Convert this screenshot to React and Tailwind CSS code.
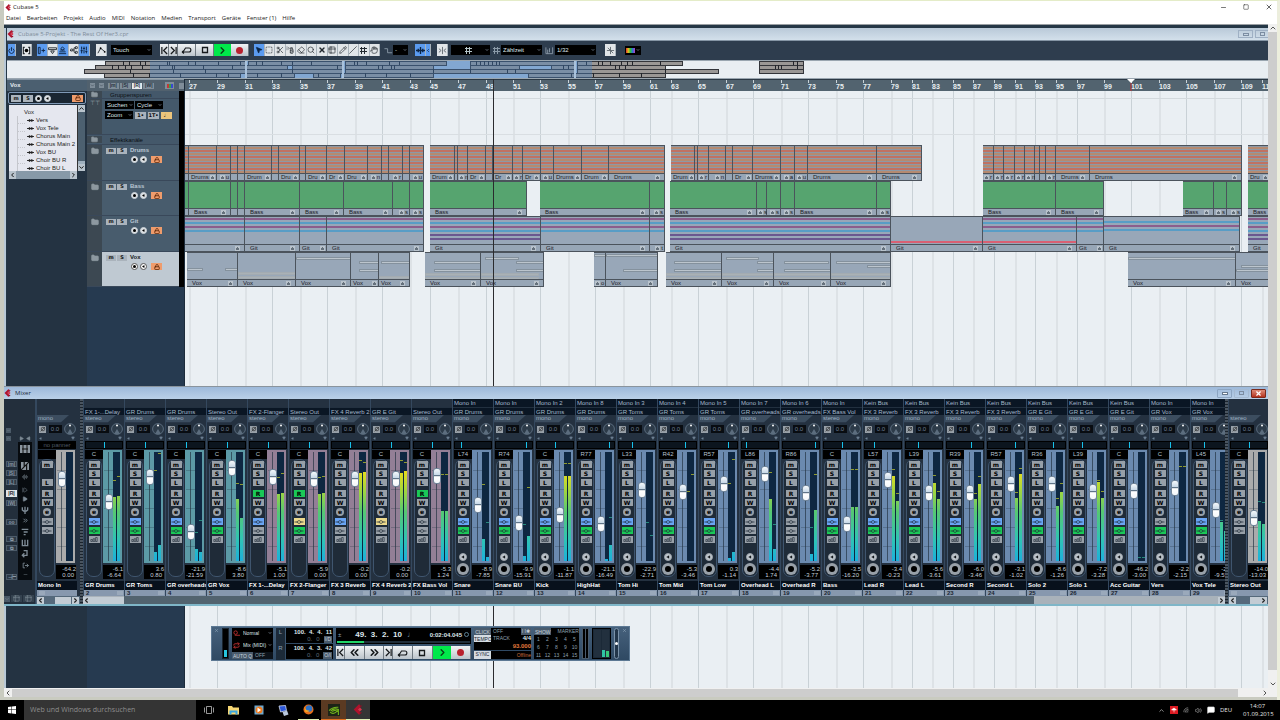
import React from 'react';
import {
  AudioLines, ChevronDown, ChevronLeft, ChevronRight, ChevronUp, ChevronsLeft, ChevronsRight,
  Eraser, Folder, Hand, Lock, MessageSquare, Minus, MousePointer2, Pencil, Power, Repeat,
  Scissors, Search, Slash, SlidersVertical, Square, SquareDashed, StepForward, Table2,
  Volume2, Wifi, X, Network, Play, SprayCan,
} from 'lucide-react';

// timeline positions are measured from the left edge of the project window
const LANE_START = 185;

const BARS = [
  189, 217, 245, 272, 300, 327, 355, 382, 410, 430, 458, 486, 513, 540, 568, 595, 623, 650, 671,
  698, 726, 753, 781, 808, 836, 863, 891, 912, 932, 953, 973, 994, 1015, 1035, 1056, 1077, 1104,
  1131, 1159, 1186, 1214, 1241, 1262,
].map((x, i) => ({ bar: 27 + i * 2, x }));

// [start, end, label]
const DRUMS = [
  [185, 189], [189, 217, 'Drums'], [217, 231, 'u'], [231, 238], [238, 245], [245, 272, 'Drums'],
  [272, 279], [279, 300, 'Drums'], [300, 306], [306, 327, 'Drums'], [327, 345, 'Drums'],
  [345, 368, 'Drums'], [368, 382, 'n'], [382, 389], [389, 403, 'r'], [403, 410], [410, 424, 'u'],
  [430, 455, 'Drums'], [455, 458], [458, 468, 'n'], [468, 486, 'Drums'], [486, 493],
  [493, 513, 'Drums'], [513, 523, 'r'], [523, 541, 'Drums'], [541, 554, 'u'], [554, 582, 'Drums'],
  [582, 609, 'Drums'], [609, 665, 'Drums'], [671, 695, 'Drums'], [695, 698], [698, 709, 'r'],
  [709, 726, 'n'], [726, 733], [733, 753, 'Drums'], [753, 781, 'Drums'], [781, 795, 'a'],
  [795, 808, 'u'], [808, 877, 'Drums'], [877, 922, 'Drums'], [983, 994, 'r'], [994, 1004, 'r'],
  [1004, 1015, 'r'], [1015, 1025, 'r'], [1025, 1035, 'n'], [1035, 1040], [1040, 1046],
  [1046, 1056, 'r'], [1056, 1090, 'Drums'], [1090, 1242, 'Drums'], [1248, 1270, 'Drums'],
];

const BASS = [
  [185, 189], [189, 231, 'Bass'], [231, 238], [238, 245], [245, 300, 'Bass'], [300, 344, 'Bass'],
  [344, 393, 'Bass'], [393, 410, 's'], [410, 424, 's'], [430, 527, 'Bass'], [540, 650, 'Bass'],
  [650, 665, 's'], [670, 757, 'Bass'], [757, 767, 's'], [767, 781, 's'], [781, 795, 's'],
  [795, 877, 'Bass'], [877, 891, 's'], [983, 1056, 'Bass'], [1056, 1104, 'Bass'],
  [1183, 1214, 'Bass'], [1214, 1227, 's'], [1227, 1242, 's'], [1248, 1290, 'Bass'],
];

// last entry picks the stripe set
const GIT = [
  [185, 245, '', 4], [245, 300, 'Git', 4], [300, 327, 'Git', 4], [327, 424, 'Git', 4],
  [430, 541, 'Git', 6], [541, 650, 'Git', 4], [650, 665, 't', 4], [670, 891, 'Git', 6],
  [891, 983, 'Git', 1], [983, 1077, 'Git', 5], [1077, 1104, 'Git', 4], [1104, 1240, 'Git', 2],
  [1248, 1290, 'Git', 6],
];

// last entry: [x, y, width] of the parts inside the folder event
const VOX = [
  [187, 238, 'Vox', [[0, 15, 16], [38, 15, 13]]],
  [238, 296, 'Vox', [[0, 19, 58], [0, 23, 58]]],
  [296, 351, 'Vox', [[0, 4, 55]]],
  [351, 379, 'Vox', [[8, 8, 20], [8, 16, 20]]],
  [379, 410, 'Vox', [[2, 8, 29], [0, 23, 31]]],
  [425, 481, 'Vox', [[9, 8, 47], [9, 16, 47], [0, 20, 56], [0, 24, 56]]],
  [481, 544, 'Vox', [[4, 4, 34], [35, 8, 28], [35, 16, 28], [0, 20, 58], [0, 24, 58]]],
  [594, 606, 'o', [[0, 1, 12]]],
  [606, 658, 'Vox', [[0, 1, 52], [17, 16, 35]]],
  [666, 722, 'Vox', [[8, 8, 48], [8, 16, 48], [0, 20, 56], [0, 24, 56]]],
  [722, 774, 'Vox', [[4, 4, 33], [35, 8, 17], [35, 16, 17], [0, 20, 52], [0, 24, 52]]],
  [774, 831, 'Vox', [[10, 8, 45], [10, 16, 47], [0, 20, 57], [0, 24, 57]]],
  [831, 891, 'Vox', [[5, 8, 55], [36, 12, 24], [0, 20, 60], [0, 24, 60]]],
  [1128, 1236, 'Vox', [[0, 4, 108]]],
  [1236, 1290, 'Vox', [[5, 12, 49], [0, 16, 54]]],
];

const TEAL = 'bg-[#5c9aa6]';
const MAUVE = 'bg-[#937f96]';
const BLUE = 'bg-[#6b8aaf]';
const GREY = 'bg-[#aaabac]';

const ch = (no, name, input, out, type, pan, color, fader, meter, peaks, max, gain, ins, eq, read) => ({
  no, name, input, out, type, pan, color, fader, meter, peaks, max, gain, ins, eq, read,
});

// fader is the distance from the top of the strip, meter and peaks are the heights left / right
const CHANNELS = [
  ch(2, 'GR Drums', '', 'FX 1-...Delay', 'stereo', 'C', TEAL, 50, [64, 65], [80, 84], '-6.1', '-6.64', 'b', 1),
  ch(3, 'GR Toms', '', 'GR Drums', 'stereo', 'C', TEAL, 25, [9, 16], [90, 107], '3.6', '0.80', 'b', 1),
  ch(4, 'GR overheads', '', 'GR Drums', 'stereo', 'C', TEAL, 80, [12, 9], [28, 40], '-21.9', '-21.59', 'b', 1),
  ch(5, 'GR Vox', '', 'Stereo Out', 'stereo', 'C', TEAL, 16, [62, 43], [77, 76], '-8.6', '3.80', 'b', 1),
  ch(6, 'FX 1-...Delay', '', 'FX 2-Flanger', 'stereo', 'C', MAUVE, 25, [67, 68], [83, 87], '-5.1', '1.00', 'b', 0, 1),
  ch(7, 'FX 2-Flanger', '', 'Stereo Out', 'stereo', 'C', MAUVE, 27, [67, 68], [83, 84], '-5.9', '0.00', 'y', 1, 1),
  ch(8, 'FX 3 Reverb', '', 'FX 4 Reverb 2', 'stereo', 'C', MAUVE, 27, [88, 89], [100, 98], '-0.2', '0.00', 'b', 0),
  ch(9, 'FX 4 Reverb 2', '', 'GR E Git', 'stereo', 'C', MAUVE, 27, [88, 90], [100, 98], '-0.2', '0.00', 'y', 0),
  ch(10, 'FX Bass Vol', '', 'Stereo Out', 'mono', 'C', MAUVE, 24, [50, 50], [86, 86], '-5.3', '1.24', '', 0, 1),
  ch(11, 'Snare', 'Mono In', 'GR Drums', 'mono', 'L74', BLUE, 53, [22, 4], [76, 38], '-8.9', '-7.85', 'b', 1),
  ch(12, 'Snare BU', 'Mono In', 'GR Drums', 'mono', 'R74', BLUE, 71, [5, 25], [36, 73], '-9.9', '-15.91', 'b', 1),
  ch(13, 'Kick', 'Mono In 2', 'GR Drums', 'mono', 'C', BLUE, 63, [85, 85], [97, 97], '-1.1', '-11.87', 'b', 1),
  ch(14, 'HighHat', 'Mono In 8', 'GR Drums', 'mono', 'R77', BLUE, 72, [2, 16], [0, 43], '-21.1', '-16.49', 'b', 1),
  ch(15, 'Tom Hi', 'Mono In 3', 'GR Toms', 'mono', 'L33', BLUE, 38, [0, 0], [38, 25], '-22.9', '-2.71', 'b', 1),
  ch(16, 'Tom Mid', 'Mono In 4', 'GR Toms', 'mono', 'R42', BLUE, 40, [0, 0], [69, 86], '-5.3', '-3.46', 'b', 1),
  ch(17, 'Tom Low', 'Mono In 5', 'GR Toms', 'mono', 'R57', BLUE, 32, [3, 9], [77, 101], '0.3', '-1.14', 'b', 1),
  ch(18, 'Overhead L', 'Mono In 7', 'GR overheads', 'mono', 'L86', BLUE, 22, [62, 12], [88, 36], '-4.4', '1.74', '', 0),
  ch(19, 'Overhead R', 'Mono In 6', 'GR overheads', 'mono', 'R86', BLUE, 41, [7, 51], [33, 86], '-5.2', '-3.77', '', 0),
  ch(20, 'Bass', 'Mono In', 'FX Bass Vol', 'stereo', 'C', BLUE, 72, [54, 54], [91, 91], '-3.5', '-16.20', 'b', 1),
  ch(21, 'Lead R', 'Kein Bus', 'FX 3 Reverb', 'mono', 'L57', BLUE, 28, [85, 60], [91, 67], '-3.4', '-0.23', 'b', 1),
  ch(22, 'Lead L', 'Kein Bus', 'FX 3 Reverb', 'mono', 'L39', BLUE, 41, [78, 62], [85, 69], '-5.6', '-3.61', 'b', 1),
  ch(23, 'Second R', 'Kein Bus', 'FX 3 Reverb', 'mono', 'R39', BLUE, 41, [62, 77], [67, 84], '-6.0', '-3.46', 'b', 1),
  ch(24, 'Second L', 'Kein Bus', 'FX 3 Reverb', 'mono', 'R57', BLUE, 32, [63, 87], [68, 92], '-3.1', '-1.02', 'b', 1),
  ch(25, 'Solo 2', 'Kein Bus', 'GR E Git', 'mono', 'R36', BLUE, 32, [55, 69], [62, 77], '-8.6', '-1.26', 'b', 1),
  ch(26, 'Solo 1', 'Kein Bus', 'GR E Git', 'mono', 'L39', BLUE, 40, [79, 63], [80, 69], '-7.2', '-3.28', 'b', 1),
  ch(27, 'Acc Guitar', 'Kein Bus', 'GR E Git', 'mono', 'C', BLUE, 39, [0, 0], [3, 3], '-46.2', '-3.00', 'b', 1),
  ch(28, 'Vers', 'Mono In', 'GR Vox', 'mono', 'C', BLUE, 36, [0, 0], [94, 94], '-2.2', '-2.15', '', 1),
  ch(29, 'Vox Tele', 'Mono In', 'GR Vox', 'mono', 'L45', BLUE, 58, [39, 30], [40, 0], '-21', '-9.55', 'b', 1),
];
const MONO_IN = ch('', 'Mono In', '', '', 'mono', '', GREY, 27, [0, 0], [0, 0], '-64.2', '0.00', '', 0);
const STEREO_OUT = ch('', 'Stereo Out', '', '', 'stereo', 'C', GREY, 66, [40, 37], [59, 58], '-14.0', '-13.03', '', 0);

const Logo = ({ className = 'size-2' }) => (
  <svg viewBox="0 0 16 16" className={className} aria-hidden="true">
    <path d="M9 0 11 4 7 8l4 4-2 4L1 8z" fill="#b0122c" />
    <path d="M10 5l3 3-3 3-3-3z" fill="#d8334a" />
    <path d="M11 1l2 2-3 3zM13 12l-2 3-2-3z" fill="#8e1026" />
  </svg>
);

const Hash = ({ className = '' }) => (
  <svg viewBox="0 0 9 9" className={`size-[9px] shrink-0 ${className}`} shapeRendering="crispEdges" aria-hidden="true">
    <path d="M2 1h1v7H2zM5 1h1v7H5zM1 2h7v1H1zM1 5h7v1H1z" fill="currentColor" />
  </svg>
);

const Skip = ({ right }) => (
  <svg viewBox="0 0 8 10" className={`h-[9px] w-[7px] ${right ? 'rotate-180' : ''}`} aria-hidden="true">
    <path d="M1 1v8M7 1 3 5l4 4" fill="none" stroke="currentColor" strokeWidth="1.4" />
  </svg>
);

const Drop = ({ value, className, label, children }) => (
  <span className={`flex shrink-0 items-center bg-black pr-px text-[#dfe5ea] ${className}`}>
    {children}
    <select aria-label={label} className="h-full min-w-0 flex-1 appearance-none bg-black pl-[2px] leading-none outline-none">
      <option>{value}</option>
    </select>
    <ChevronDown className="size-[4px] shrink-0 text-[#8fa0b0]" strokeWidth={4} />
  </span>
);

const ToolButton = ({ label, className = '', on, children }) => (
  <button
    aria-label={label}
    className={`flex h-[12px] shrink-0 items-center justify-center border-r border-[#a9b3bb] ${
      on ? 'bg-[#5b9bf0] text-[#0b2444]' : 'bg-[#e1e5e8] text-[#22292f]'
    } ${className}`}
  >
    {children}
  </button>
);

const TOOLS = [
  ['Objektauswahl', MousePointer2], ['Auswahlbereich', SquareDashed], ['Zerschneiden', Scissors],
  ['Kleben', SprayCan], ['Radieren', Eraser], ['Zoom', Search], ['Stummschalten', X],
  ['Comp', Table2], ['Stift', Pencil], ['Linie', Slash], ['Time Warp', Hash], ['Scrubben', Hand],
];

const Toolbar = () => (
  <div className="flex h-[19px] items-center overflow-hidden bg-[#2e3d4e] pb-px pl-px text-[6px]">
    <ToolButton label="Aktivieren" on className="w-[8px]"><Power className="size-[7px]" strokeWidth={3} /></ToolButton>
    <ToolButton label="Delay" className="ml-[6px] w-[10px]">
      <svg viewBox="0 0 20 20" className="size-[9px]"><path d="M6 3H3v14h3M14 3h3v14h-3" fill="none" stroke="currentColor" strokeWidth="2.5" /><circle cx="10" cy="10" r="4" /></svg>
    </ToolButton>
    <div className="ml-[5px] flex w-[53px]">
      <ToolButton label="Inspector" on className="flex-1">
        <svg viewBox="0 0 20 20" className="size-[9px]"><path d="M3 3h4v14H3zM10 10h8M14 6v8" fill="none" stroke="currentColor" strokeWidth="2" /></svg>
      </ToolButton>
      <ToolButton label="Infozeile" className="flex-1">
        <svg viewBox="0 0 20 20" className="size-[9px]"><path d="M1 4h18v4H1zM6 11h8l-4 6z" fill="none" stroke="currentColor" strokeWidth="2" /></svg>
      </ToolButton>
      <ToolButton label="Übersicht" on className="flex-1">
        <svg viewBox="0 0 20 20" className="size-[9px]"><path d="M2 17h16M3 13h14M5 9h10M10 2l4 4-4 3-4-3z" fill="none" stroke="currentColor" strokeWidth="2" /></svg>
      </ToolButton>
      <ToolButton label="Pool" className="flex-1"><Network className="size-[8px] -rotate-90" strokeWidth={2.5} /></ToolButton>
      <ToolButton label="Mixer" on className="flex-1"><SlidersVertical className="size-[8px]" strokeWidth={3} /></ToolButton>
    </div>
    <ToolButton label="Automation" className="ml-[6px] w-[11px]">
      <svg viewBox="0 0 20 20" className="size-[9px]"><path d="M2 16 8 5l10 8" fill="none" stroke="currentColor" strokeWidth="2" /><circle cx="8" cy="5" r="2" /><circle cx="17" cy="13" r="2" /></svg>
    </ToolButton>
    <Drop label="Automationsmodus" value="Touch" className="ml-[4px] h-[10px] w-[41px]" />
    <TransportButtons compact />
    <div className="ml-[5px] flex w-[126px]">
      {TOOLS.map(([name, Icon], i) => (
        <ToolButton key={name} label={name} on={i === 0} className="flex-1">
          <Icon className={`size-[8px] ${i === 0 ? 'fill-current' : ''}`} strokeWidth={i === 6 ? 4 : 2} />
        </ToolButton>
      ))}
    </div>
    <svg viewBox="0 0 20 20" className="ml-[4px] size-[9px] shrink-0"><path d="M1 6h7v9h10" fill="none" stroke="#8b9aa8" strokeWidth="2" /></svg>
    <Drop label="Farbe" value="-" className="h-[10px] w-[15px]" />
    <div className="ml-[7px] flex">
      <ToolButton label="Autoscroll" on className="w-[11px]">
        <svg viewBox="0 0 20 20" className="size-[9px]"><path d="M10 2v16M0 10h20M5 6v8M15 6v8" fill="none" stroke="currentColor" strokeWidth="3" /></svg>
      </ToolButton>
      <ToolButton label="Stop" on className="w-[5px]"><ChevronLeft className="size-[5px]" strokeWidth={5} /></ToolButton>
    </div>
    <ToolButton label="Raster" className="ml-[6px] w-[11px]">
      <svg viewBox="0 0 20 20" className="size-[9px]"><path d="M10 2v16M2 6l5 4-5 4M18 6l-5 4 5 4" fill="none" stroke="#60686e" strokeWidth="2" /></svg>
    </ToolButton>
    <Drop label="Rastermodus" value="" className="ml-[3px] h-[10px] w-[39px]"><Hash className="ml-[13px] text-[#b4c4c8]" /></Drop>
    <Hash className="ml-[2px] text-[#8b9aa8]" />
    <Drop label="Rastertyp" value="Zählzeit" className="h-[10px] w-[41px]" />
    <svg viewBox="0 0 20 20" className="ml-[3px] size-[9px] shrink-0"><path d="M2 3v14h15V3M6 17V8M10 14V5" fill="none" stroke="#8b9aa8" strokeWidth="2" /></svg>
    <Drop label="Quantisierung" value="1/32" className="ml-px h-[10px] w-[41px]" />
    <ToolButton label="Nulldurchgänge" className="ml-[9px] w-[11px]">
      <svg viewBox="0 0 20 20" className="size-[9px]"><path d="M10 2v16M2 10h16M4 4l12 12" fill="none" stroke="#60686e" strokeWidth="2" /></svg>
    </ToolButton>
    <button aria-label="Farben" className="ml-[9px] flex h-[9px] w-[16px] shrink-0 items-center gap-px bg-black px-px">
      <span className="h-[5px] w-[9px] bg-[linear-gradient(to_right,#e03030,#e0c020,#30c040,#3070e0,#c040c0)]" />
      <ChevronDown className="size-[4px] text-[#8fa0b0]" strokeWidth={4} />
    </button>
  </div>
);

const TransportButtons = ({ compact }) => {
  const face = 'flex items-center justify-center border-r border-[#6f7880] bg-linear-to-b from-[#f1f3f5] to-[#bcc4cb] text-[#16191c]';
  return (
    <div className={`flex shrink-0 ${compact ? 'ml-[8px] h-[12px] w-[89px]' : 'h-[13px] w-full'}`}>
      <button aria-label="Zum Anfang" className={`${face} w-[9px]`}><Skip /></button>
      {!compact && (
        <>
          <button aria-label="Rücklauf" className={`${face} flex-1`}><ChevronsLeft className="size-[13px]" strokeWidth={3} /></button>
          <button aria-label="Vorlauf" className={`${face} flex-1`}><ChevronsRight className="size-[13px]" strokeWidth={3} /></button>
        </>
      )}
      <button aria-label="Zum Ende" className={`${face} w-[9px]`}><Skip right /></button>
      <button aria-label="Cycle" className={`${face} flex-1`}>
        <svg viewBox="0 0 24 16" className="h-[8px] w-[13px]"><path d="M3 12h14c5 0 5-8 0-8H10l-3 5M3 12l4-3M3 12l4 3" fill="none" stroke="currentColor" strokeWidth="2.2" /></svg>
      </button>
      <button aria-label="Stop" className={`${face} flex-1`}>
        <svg viewBox="0 0 8 8" className="size-[8px]"><path d="M1.500 1.500h5v5h-5z" fill="none" stroke="currentColor" strokeWidth="1.300" /></svg>
      </button>
      <button aria-label="Start" className="flex flex-1 items-center justify-center bg-[#00e84a] text-[#0a3c18]"><ChevronRight className="size-[11px]" strokeWidth={3} /></button>
      <button aria-label="Aufnahme" className={`${face} flex-1`}><span className="size-[7px] rounded-full bg-[#b9202e]" /></button>
    </div>
  );
};

const ROWS = [
  { y: 1, h: 4, parts: [[105, 246], [248, 343], [345, 446], [470, 574], [577, 682], [759, 803]], cuts: [123, 129, 140, 145, 167, 169, 188, 195, 218, 240, 256, 262, 281, 292, 311, 354, 357, 366, 389, 399, 476, 480, 484, 488, 492, 496, 499, 586, 598, 602, 610, 621, 627, 632, 660, 793, 797] },
  { y: 5, h: 4, parts: [[95, 287], [292, 342], [345, 433], [470, 519], [551, 574], [577, 665], [759, 803]], cuts: [112, 118, 125, 131, 142, 159, 172, 174, 203, 232, 337, 378, 382, 391, 394, 563, 568, 615, 619, 625, 775, 778, 781, 797] },
  { y: 9, h: 4, parts: [[84, 342], [345, 574], [577, 718], [759, 803]], cuts: [130, 173, 205, 292, 433, 470, 507, 515, 665] },
  { y: 13, h: 4, parts: [[104, 240], [245, 294], [313, 340], [343, 433], [528, 665]], cuts: [133, 149, 180, 216, 228, 257, 281, 318, 365, 386, 410, 571, 593, 619, 641] },
];

const Overview = () => (
  <div className="h-[19px] overflow-hidden border-y border-[#9aa6b0] bg-[#e9eef2]">
    <svg width="1261" height="17" viewBox="7 0 1261 17" shapeRendering="crispEdges" aria-label="Projektübersicht">
      <rect x="150" y="0" width="442" height="17" fill="#a6bfdb" />
      {ROWS.map((r) =>
        r.parts.map(([a, b]) => (
          <rect key={`${r.y}-${a}`} x={a} y={r.y - 1} width={b - a} height={r.h} fill="#9a9795" stroke="#33353a" strokeWidth="1" />
        ))
      )}
      {ROWS.map((r) => r.cuts.map((c) => <rect key={`${r.y}c${c}`} x={c} y={r.y - 1} width="1" height={r.h} fill="#22252b" />))}
      <rect x="150" y="0" width="442" height="17" fill="#4680bf" fillOpacity="0.38" />
      <path d="M246 0v17M343 0v17M575 0v17" stroke="#a9c2dc" strokeWidth="2" />
    </svg>
  </div>
);

const MINI = 'flex items-center justify-center bg-[#aab3bc] text-[5px] font-bold leading-none text-[#111] font-["DejaVu_Sans",sans-serif]';

const ArmButtons = ({ light }) => (
  <div className="flex items-center gap-[2px]">
    {[0, 1].map((i) => (
      <button
        key={i}
        aria-label={i ? 'Monitor' : 'Aufnahme'}
        className={`flex size-[7px] items-center justify-center rounded-full border ${
          light ? 'border-[#555] bg-white text-black' : 'border-[#c9d0d6] bg-[#dfe3e6] text-black'
        }`}
      >
        {i ? <Play className="size-[3px] rotate-180 fill-current" /> : <span className="size-[3px] rounded-full bg-black" />}
      </button>
    ))}
  </div>
);

const LockButton = ({ className = '' }) => (
  <button aria-label="Sperren" className={`flex h-[7px] w-[11px] items-center justify-center bg-[#ef9c6c] text-[#5a2608] ${className}`}>
    <Lock className="size-[6px]" strokeWidth={3} />
  </button>
);

const Inspector = () => (
  <aside className="flex w-[80px] shrink-0 flex-col bg-[#243342]">
    <h2 className="h-[12px] border-t border-[#8494a2] bg-[#4b5f70] pl-[3px] text-[6px] leading-[10px] font-bold text-[#e6ebef]">Vox</h2>
    <div className="m-px flex h-[12px] items-center gap-[2px] rounded-[2px] border border-[#7f98b5] bg-[#1a2632] px-[2px]">
      <button className={`${MINI} h-[7px] w-[10px]`}>m</button>
      <button className={`${MINI} h-[7px] w-[10px]`}>S</button>
      <ArmButtons />
      <LockButton className="ml-auto" />
    </div>
    <div className="mr-[2px] flex h-[66px] pl-[2px]">
      <ul className="min-w-0 flex-1 overflow-hidden bg-[#e5e7ef] pt-[3px] text-[6px] leading-[8px] text-[#1d1d22]">
        <li className="pl-[15px]">Vox</li>
        {['Vers', 'Vox Tele', 'Chorus Main', 'Chorus Main 2', 'Vox BU', 'Choir BU R', 'Choir BU L'].map((t) => (
          <li key={t} className="flex items-center gap-[2px] whitespace-nowrap">
            <span className="ml-[8px] h-[8px] w-[8px] border-b border-l border-[#c5c7cd] [border-bottom-style:dotted]" />
            <svg viewBox="0 0 7 5" className="h-[5px] w-[7px]"><path d="M0 2.5h7" stroke="#333" /><path d="M1 2.5 2.5 1 3.5 2 5 1l1 1.5L5 4 3.5 3 2.5 4z" fill="#222" /></svg>
            {t}
          </li>
        ))}
      </ul>
      <div className="flex w-[8px] flex-col items-center justify-between border-l border-[#333] bg-[#4c6070]">
        <ChevronUp className="h-[7px] w-full bg-[#b9c4cd]" strokeWidth={3} />
        <span className="mt-auto h-[3px] w-full bg-[#9fb0be]" />
        <ChevronDown className="h-[7px] w-full bg-[#b9c4cd]" strokeWidth={3} />
      </div>
    </div>
    <div className="mx-[2px] flex h-[8px] w-[68px] items-center justify-between bg-[#8799a8]">
      <ChevronLeft className="h-full w-[7px] bg-[#b9c4cd]" strokeWidth={3} />
      <ChevronRight className="h-full w-[7px] bg-[#b9c4cd]" strokeWidth={3} />
    </div>
  </aside>
);

const TrackRow = ({ name, className, selected }) => (
  <li className={`flex border-b border-[#39485a] ${className}`}>
    <span className="flex w-[15px] justify-center bg-[#3c4852] pt-[2px]"><Folder className="size-[8px] fill-[#8d98a0] text-[#8d98a0]" /></span>
    <div className={`flex-1 pt-[2px] pl-[4px] ${selected ? 'bg-[#bfc9d2] text-[#15191d]' : 'bg-[#485c6d] text-[#b9c7d3]'}`}>
      <div className="flex items-center gap-px text-[6px] leading-[7px] font-bold">
        <button className={`${MINI} h-[6px] w-[10px]`}>m</button>
        <button className={`${MINI} h-[6px] w-[10px]`}>S</button>
        <span className="pl-[2px]">{name}</span>
      </div>
      <div className="mt-[2px] flex items-center gap-[4px] pl-[25px]">
        <ArmButtons light={selected} />
        <LockButton />
      </div>
    </div>
  </li>
);

const TrackList = () => (
  <section className="w-[98px] shrink-0 border-r border-[#1c2b3a] bg-[#263a50]">
    <div className="flex h-[12px] items-center gap-px border-t border-[#8494a2] bg-[#51616e] pl-[3px] text-[5px] leading-none text-[#26333f]">
      <ChevronDown className="mr-[3px] size-[5px] bg-[#7f8d99]" />
      <ChevronDown className="mr-[3px] size-[5px] bg-[#7f8d99]" />
      {['m', 'S', 'R', 'W'].map((b) => (
        <button key={b} className={`h-[6px] w-[11px] font-bold ${b === 'R' ? 'bg-[#e6eaed]' : 'bg-[#7f8d99]'}`}>|{b}|</button>
      ))}
      <button aria-label="Spurfarben" className="ml-[10px] flex h-[7px] w-[9px] items-center justify-center bg-[#7f8d99]"><span className="h-[4px] w-[6px] bg-[linear-gradient(to_right,#c03838_33%,#38a048_33%_66%,#3848d0_66%)]" /></button>
      <button aria-label="Teilen" className="ml-[4px] h-[6px] w-[5px] bg-[#7f8d99]" />
    </div>
    <div className="flex">
      <ul className="flex-1">
        <li className="flex h-[8px] items-center border-b border-[#39485a] bg-[#44586a] text-[6px] leading-none text-[#0a0e12]">
          <span className="flex w-[15px] justify-center bg-[#3c4852]"><Folder className="size-[7px] fill-[#8d98a0] text-[#8d98a0]" /></span>
          <span className="pl-[8px]">Gruppenspuren</span>
        </li>
        <li className="flex h-[36px] border-b border-[#39485a] text-[6px]">
          <span className="w-[15px] bg-[#3c4852] pt-px text-center leading-none text-[#98a3ab]">⊤⊤</span>
          <div className="flex-1 bg-[#44596b] pt-[2px] pl-[3px]">
            <div className="flex gap-px">
              <Drop label="Suchen" value="Suchen" className="h-[8px] w-[29px]" />
              <Drop label="Cycle" value="Cycle" className="h-[8px] w-[28px]" />
            </div>
            <div className="mt-[2px] flex items-center gap-[2px]">
              <Drop label="Zoom" value="Zoom" className="h-[8px] w-[28px]" />
              <button className={`${MINI} h-[7px] w-[11px]`}>1•</button>
              <button className={`${MINI} h-[7px] w-[11px]`}>1T•</button>
              <button className="flex h-[7px] w-[11px] items-center justify-center bg-[#ecc57c] leading-none">♩</button>
            </div>
          </div>
        </li>
        <li className="flex h-[10px] items-center border-b border-[#39485a] bg-[#44586a] text-[6px] leading-none text-[#0a0e12]">
          <span className="flex w-[15px] justify-center bg-[#3c4852]"><Folder className="size-[7px] fill-[#8d98a0] text-[#8d98a0]" /></span>
          <span className="pl-[8px]">Effektkanäle</span>
        </li>
        <TrackRow name="Drums" className="h-[36px]" />
        <TrackRow name="Bass" className="h-[35px]" />
        <TrackRow name="Git" className="h-[36px]" />
        <TrackRow name="Vox" className="h-[35px]" selected />
      </ul>
      <span className="w-[5px] bg-black" />
    </div>
  </section>
);

const STRIPES = {
  1: [['mt-[24px]', 'bg-[#e0596b]']],
  2: [['mt-[4px]', 'bg-[#519cc8]'], ['mt-[2px]', 'bg-[#8a5688]'], ['mt-[2px]', 'bg-[#519cc8]']],
  4: [['mt-px', 'bg-[#8a5688]'], ['mt-[2px]', 'bg-[#519cc8]'], ['mt-[2px]', 'bg-[#8a5688]'], ['mt-[2px]', 'bg-[#519cc8]']],
};
STRIPES[5] = [...STRIPES[4], ['mt-[9px]', 'bg-[#e0596b]']];
STRIPES[6] = [...STRIPES[4], ['mt-[2px]', 'bg-[#65508b]'], ['mt-[2px]', 'bg-[#65508b]']];

const BODY = {
  drums: 'bg-[repeating-linear-gradient(to_bottom,#8d99a6_0_1px,#b58a70_1px_3px,#8d99a6_3px_4px,#c07263_4px_6px)]',
  bass: 'bg-[#56a46f]',
  git: 'bg-[#98a7b8]',
  vox: 'bg-[#98a7b8]',
};

// narrow events only have room for the start of the name
const fitLabel = (label = '', width) => label.slice(0, width < 21 ? 2 : width < 24 ? 3 : width < 28 ? 4 : 20);

const Clip = ({ kind, width, gap, label, extra }) => (
  <div className="flex shrink-0 flex-col border-y border-r border-[#4b535c]" style={{ width, marginLeft: gap }}>
    <div className={`flex-1 overflow-hidden ${BODY[kind]}`}>
      {kind === 'git' && STRIPES[extra].map(([m, c], i) => <div key={i} className={`h-[2px] opacity-90 ${m} ${c}`} />)}
      {kind === 'vox' && (
        <svg width={width} height="27" shapeRendering="crispEdges" aria-hidden="true">
          {extra.map(([x, y, w]) => (
            <g key={`${x}-${y}`}>
              <rect x={x} y={y} width={w} height="3" fill={y > 18 ? '#a3abb1' : '#84919d'} />
              <rect x={x + 1} y={y + 1} width={w - 2} height="1" fill={y > 18 ? '#a9b1b6' : '#bcc5cd'} />
            </g>
          ))}
        </svg>
      )}
    </div>
    <div className="flex h-[7px] items-center gap-px border-t border-[#4b535c] bg-[#97a6b6] px-px text-[6px] leading-[6px] text-[#1b2025]">
      {width >= 18 && <span className={`whitespace-nowrap ${width < 32 ? 'pl-px' : 'pl-[4px]'}`}>{fitLabel(label, width)}</span>}
      {width >= 10 && (
        <svg viewBox="0 0 5 5" className={`ml-auto size-[5px] shrink-0 ${width > 30 ? 'mr-[3px]' : ''}`} shapeRendering="crispEdges" aria-hidden="true">
          <path d="M0 0h5v5H0z" fill="#b9c3cc" /><path d="M1 2h3v2H1zM2 1h1v1H2z" fill="#65717c" />
        </svg>
      )}
      {width >= 10 && width < 18 && <span>{label}</span>}
    </div>
  </div>
);

const Lane = ({ kind, clips, className }) => (
  <div className={`flex overflow-hidden ${className}`}>
    {clips.map(([a, b, label, extra], i) => (
      <Clip key={a} kind={kind} width={b - a} gap={a - (i ? clips[i - 1][1] : LANE_START)} label={label} extra={extra} />
    ))}
  </div>
);

const Arrangement = () => (
  <section className="relative flex min-w-0 flex-1 flex-col overflow-hidden bg-[#eaeff3]">
    <div className="flex h-[12px] shrink-0 border-t border-[#2b3844] bg-[#52636f] text-[7px] font-bold text-[#e8edf0]">
      {BARS.map(({ bar, x }, i) => (
        <span
          key={bar}
          className="shrink-0 bg-[linear-gradient(#c9d2d8,#c9d2d8)] bg-[length:1px_3px] bg-no-repeat pt-px leading-[11px]"
          style={{ width: (BARS[i + 1]?.x ?? 1290) - x, marginLeft: i ? 0 : x - LANE_START }}
        >
          {bar}
        </span>
      ))}
    </div>
    <div className="relative flex-1">
      <div className="absolute inset-0 flex">
        {BARS.map(({ bar, x }, i) => (
          <span
            key={bar}
            className={`shrink-0 ${i % 2 ? 'border-l border-[#c9d1d6]' : 'border-l-2 border-[#dde2e6]'}`}
            style={{ width: (BARS[i + 1]?.x ?? 1290) - x, marginLeft: i ? 0 : x - LANE_START }}
          />
        ))}
      </div>
      <div className="relative">
        <div className="h-[8px] border-b border-[#d3d9dd]" />
        <div className="h-[36px] border-b border-[#d9dee2]" />
        <div className="h-[10px]" />
        <Lane kind="drums" clips={DRUMS} className="h-[36px]" />
        <Lane kind="bass" clips={BASS} className="h-[35px]" />
        <Lane kind="git" clips={GIT} className="h-[36px]" />
        <Lane kind="vox" clips={VOX} className="h-[35px]" />
      </div>
    </div>
    <span className="absolute inset-y-0 left-[308px] w-px bg-[#2b2b2e]" />
    <svg viewBox="0 0 8 12" className="absolute top-0 left-[942px] h-[12px] w-[8px]"><path d="M0 0h8L4 4z" fill="#fff" /><path d="M4 4v8" stroke="#c23030" /></svg>
  </section>
);

const WinTitle = ({ title, className, children }) => (
  <div className={`flex shrink-0 items-center gap-[3px] text-[6px] leading-none font-["Open_Sans",sans-serif] ${className}`}>
    <Logo className="size-[8px]" />
    <span>{title}</span>
    <div className="ml-auto flex items-center gap-[2px]">{children}</div>
  </div>
);

const ProjectWindow = () => (
  <main className="flex flex-1 flex-col border-l-2 border-[#b8c8d6] pl-px">
    <WinTitle title="Cubase 5-Projekt - The Rest Of Her3.cpr" className="h-[13px] border-b border-[#8595a5] bg-linear-to-b from-[#b9c9d8] to-[#d3e0eb] text-[#7e8c9a]">
      <button aria-label="Minimieren" className="flex h-[8px] w-[15px] items-center justify-center border border-[#9fb0c4]"><span className="h-[3px] w-[6px] border border-[#7c8da2]" /></button>
      <button aria-label="Maximieren" className="flex h-[8px] w-[13px] items-center justify-center border border-r-0 border-[#9fb0c4]"><span className="h-[4px] w-[5px] border border-[#7c8da2]" /></button>
    </WinTitle>
    <Toolbar />
    <Overview />
    <div className="flex min-h-0 flex-1">
      <Inspector />
      <TrackList />
      <Arrangement />
    </div>
  </main>
);

const STATE = { b: 'bg-[#69a5f5]', y: 'bg-[#ecd98c]' };

const Diamond = () => (
  <svg viewBox="0 0 20 12" className="h-[6px] w-[10px]"><path d="M1 6h4M15 6h4M5 6l5-3 5 3-5 3z" fill="none" stroke="#1e2a35" strokeWidth="1.5" /></svg>
);

const StripButtons = ({ c }) => {
  const base = 'flex h-[7px] w-[11px] shrink-0 items-center justify-center text-[6px] leading-none font-bold text-black';
  const off = 'bg-[#98a0a8]';
  return (
    <div className="mx-auto flex h-[118px] w-[16px] flex-col items-center gap-[2px] rounded-[7px] border border-[#3f556e] bg-[#1f2b38] pt-px pb-px font-['DejaVu_Sans',sans-serif]">
      <button className={`${base} ${off}`}>m</button>
      <button className={`${base} ${off} ${c.name === 'Mono In' ? 'invisible' : ''}`}>S</button>
      <button className={`${base} ${off}`}>L</button>
      <button className={`${base} mt-[2px] ${c.read ? 'bg-[#1ac957]' : off}`}>R</button>
      <button className={`${base} ${off}`}>W</button>
      <button className="flex size-[8px] shrink-0 items-center justify-center rounded-full bg-[#98a0a8] text-[6px] leading-none font-bold text-black">e</button>
      <button aria-label="Inserts" className={`${base} ${STATE[c.ins] ?? off}`}><Diamond /></button>
      <button aria-label="EQs" className={`${base} ${c.eq ? 'bg-[#1ac957]' : off}`}><Diamond /></button>
      {c.no && (
        <button aria-label="Sends" className={`${base} ${off}`}>
          <svg viewBox="0 0 20 12" className="h-[5px] w-[8px]"><path d="M2 11V6h4v5zM8 11V4h4v7zM14 11V1h4v10z" fill="none" stroke="#1e2a35" strokeWidth="1.5" /></svg>
        </button>
      )}
      {c.no > 10 && (
        <>
          <button aria-label="Monitor" className="mt-auto flex size-[8px] items-center justify-center rounded-full border border-[#98a0a8] bg-[#c3c9cf]"><Play className="size-[4px] rotate-180 fill-black" /></button>
          <button aria-label="Aufnahme" className="flex size-[12px] shrink-0 items-center justify-center rounded-full bg-[#98a0a8]"><span className="size-[6px] rounded-full bg-black" /></button>
        </>
      )}
    </div>
  );
};

const METER_SCALE =
  'bg-[linear-gradient(to_top,#1bb0dc,#2fc4b4_20%,#55c873_45%,#a4d63c_65%,#e6dc1e_82%)] bg-[length:100%_109px] bg-bottom bg-no-repeat';

const Meter = ({ level, peak }) => (
  <span className="relative flex w-[3px] items-end">
    <span className={`w-full ${METER_SCALE}`} style={{ height: level }} />
    {peak > 0 && (
      <span className={`absolute left-0 h-px w-full ${peak > 60 ? 'bg-[#8f9c30]' : 'bg-[#258a7c]'}`} style={{ bottom: peak }} />
    )}
  </span>
);

const Fader = ({ c }) => (
  <div className={`flex h-[113px] w-[19px] justify-between py-[2px] pr-[2px] pl-px ${c.color}`}>
    <div className="flex w-[9px] justify-center bg-[linear-gradient(to_right,transparent_4px,#20303faa_4px_5px,transparent_5px),repeating-linear-gradient(to_bottom,transparent_0_18px,#20303f44_18px_19px)]">
      <input
        type="range"
        aria-label={`Pegel ${c.name}`}
        min="0"
        max="93"
        defaultValue={101 - c.fader}
        className="h-[109px] w-[8px] appearance-none bg-transparent [direction:rtl] [writing-mode:vertical-lr] [&::-webkit-slider-thumb]:h-[16px] [&::-webkit-slider-thumb]:w-[8px] [&::-webkit-slider-thumb]:appearance-none [&::-webkit-slider-thumb]:rounded-[3px] [&::-webkit-slider-thumb]:border [&::-webkit-slider-thumb]:border-[#6f8499] [&::-webkit-slider-thumb]:bg-[linear-gradient(#f4f8fb,#c4d6e6_45%,#5f7488_46%_52%,#fff_54%,#f4f7fa)]"
      />
    </div>
    <div className="flex h-full w-[7px] gap-px bg-[#0e2741]">
      <Meter level={c.meter[0]} peak={c.peaks[0]} />
      <Meter level={c.meter[1]} peak={c.peaks[1]} />
    </div>
  </div>
);

const panOffset = (pan) => (/\d/.test(pan) ? (pan[0] === 'L' ? -1 : 1) * Number(pan.slice(1)) * 0.46 + 50 : 50);

const Channel = ({ c }) => (
  <div className="flex w-[41px] shrink-0 flex-col border-l border-[#34485e] bg-[#243140] text-[6px] whitespace-nowrap text-[#a6b8cb]">
    <div className={`h-[8px] pl-px leading-[8px] ${c.input && 'bg-[#0a1624]'}`}>{c.input}</div>
    <div className={`h-[8px] pl-px leading-[8px] ${c.out && 'border-t border-[#22303f] bg-[#0a1624]'}`}>{c.out}</div>
    <div className="h-[8px] w-[32px] bg-[#3c4d5f] pl-px leading-[7px] text-[#9fb0c0] [clip-path:polygon(0_0,100%_0,75%_90%,0_90%)]">{c.type}</div>
    <div className="flex h-[12px] items-center justify-between pr-px pl-[2px]">
      <button aria-label="Phase" className="flex size-[7px] items-center justify-center bg-[#98a0a8]">
        <svg viewBox="0 0 10 10" className="size-[6px]"><path d="M1 9 9 1" stroke="#222" /><circle cx="5" cy="5" r="3" fill="none" stroke="#222" /></svg>
      </button>
      <span className="h-[8px] w-[13px] bg-[#080c11] text-center leading-[8px] text-[#6d7f91]">0.0</span>
      <svg viewBox="0 0 12 12" className="size-[12px]"><circle cx="6" cy="6" r="5.4" fill="#2d3b49" stroke="#5a6c7d" /><path d="M6 6 3 11h6z" fill="#5c6d7e" /><circle cx="6" cy="2.5" r="1" fill="#fff" /></svg>
    </div>
    <div className="flex h-[6px] items-center justify-between px-[2px] text-[#6e8093]">
      <Play className="size-[3px] rotate-180 fill-current" />
      <Play className="size-[4px] rotate-90 fill-current" />
    </div>
    {c.pan ? (
      <div className="mx-px flex h-[8px] border border-black bg-[#0c151e]">
        <span className="w-px bg-[#18c2ea]" style={{ marginLeft: `${panOffset(c.pan)}%` }} />
      </div>
    ) : (
      <div className="mx-px h-[8px] bg-black text-center leading-[8px] text-[#4d5a66]">no panner</div>
    )}
    <div className="flex h-[132px] justify-between pt-px pr-px pl-px">
      <div className="w-[18px]">
        <div className="h-[9px] bg-black text-center leading-[8px] text-[#b4c2cf]">{c.pan}</div>
        <StripButtons c={c} />
      </div>
      <div>
        <Fader c={c} />
        <div className="mt-[2px] h-[14px] w-[20px] bg-black text-right text-[#c3d0dc]">
          <div className="h-[6px] leading-[8px]">{c.max}</div>
          <div className="h-[7px] pr-[2px] leading-[8px]">{c.gain}</div>
        </div>
      </div>
    </div>
    <div className="h-[9px] bg-[#08111c] pl-px leading-[9px] font-bold text-white">{c.name}</div>
    <div className="flex h-[6px] justify-between bg-[#8798ae] pr-px pl-[2px] leading-[6px] font-bold text-[#1c2733]">
      {c.no}
      <span className="my-px w-[6px] bg-[#9aa9bb]" />
    </div>
  </div>
);

const Arrow = ({ right }) => {
  const Icon = right ? ChevronRight : ChevronLeft;
  return <button aria-label={right ? 'Weiter' : 'Zurück'} className="bg-[#c3ccd4] text-[#222]"><Icon className="size-[7px]" strokeWidth={4} /></button>;
};

const Divider = () => (
  <span className="w-[3px] shrink-0 bg-[repeating-linear-gradient(to_bottom,#4a5560_0_2px,#1a232c_2px_3px)]" />
);

const SIDE_BTN = 'flex h-[6px] w-[11px] shrink-0 items-center justify-center border border-[#4d5c6a] bg-[#2d3a47] text-[5px] leading-none font-bold text-[#8a98a6]';

const MixerSide = () => (
  <div className="flex w-[32px] shrink-0 flex-col border-r border-[#34485e] bg-[#232f3c] text-[#7d8a95]">
    <div className="flex justify-between pr-[3px] pl-[2px]">
      <div className="flex w-[11px] flex-col items-center gap-[3px]">
        <ChevronDown className="mt-[29px] size-[5px] self-start bg-[#4a5967]" />
        <ChevronUp className="mb-[17px] size-[5px] self-start bg-[#4a5967]" />
        {['m', 'S', 'L'].map((t) => <button key={t} className={SIDE_BTN}>|{t}|</button>)}
        <button className="mt-[2px] h-[7px] w-[11px] bg-[#dfe4e8] text-[5px] leading-none font-bold text-[#1c2733]">|R|</button>
        <button className={SIDE_BTN}>|W|</button>
        <button className={`${SIDE_BTN} mt-[10px]`}>oo</button>
        <button className={`${SIDE_BTN} mt-[8px]`}>⧉</button>
        <button className={SIDE_BTN}>⧉</button>
        <button className={`${SIDE_BTN} mt-auto`}>⊣⊢</button>
      </div>
      <div className="flex w-[14px] flex-col items-center">
        <div className="mt-[37px] flex gap-[2px]"><Play className="size-[5px] fill-current" /><Play className="size-[5px] rotate-180 fill-current" /></div>
        <div className="mt-px flex h-[138px] w-full flex-col items-center justify-between bg-[#070b0f] py-[3px]">
          <svg viewBox="0 0 10 8" className="h-[8px] w-[10px]"><path d="M0 0h10v8H0z" fill="#8b959e" /><path d="M3 0v8M7 0v8M2 4h6" stroke="#111" /></svg>
          <svg viewBox="0 0 10 10" className="mt-[6px] size-[8px]"><path d="M0 0h10v10H0z" fill="#8b959e" /><path d="M0 10 10 0M4 0v6M7 3v7" stroke="#111" strokeWidth="1.5" /></svg>
          <AudioLines className="size-[6px]" />
          <StepForward className="mt-[4px] size-[6px]" />
          <Play className="size-[6px] fill-current" />
          <svg viewBox="0 0 12 12" className="size-[8px]"><path d="M2 2v4q4 4 8 0V2M6 1v11" fill="none" stroke="currentColor" strokeWidth="2" /></svg>
          <ChevronsRight className="size-[7px]" strokeWidth={3} />
          <svg viewBox="0 0 12 12" className="size-[8px]"><path d="M1 2h10M4 6h6M4 10h3" stroke="currentColor" strokeWidth="2" /></svg>
          <svg viewBox="0 0 12 12" className="size-[8px]"><path d="M2 1v9h8V1M6 1v9" fill="none" stroke="currentColor" strokeWidth="2" /></svg>
          <svg viewBox="0 0 12 12" className="size-[8px]"><path d="M4 1h5v7H3M5 5 2 8l3 3" fill="none" stroke="currentColor" strokeWidth="2" /></svg>
          <svg viewBox="0 0 12 12" className="size-[7px]"><path d="M5 2H2v8h3M5 6h6M8 3l3 3-3 3" fill="none" stroke="currentColor" strokeWidth="1.5" /></svg>
          <Minus className="size-[5px]" />
        </div>
      </div>
    </div>
    <div className="mt-auto mb-[2px] flex items-center gap-px">
      <ChevronDown className="size-[6px] bg-[#4a5967]" />
      <Table2 className="h-[7px] w-[11px] bg-[#34424f]" />
      <Table2 className="h-[7px] w-[11px] bg-[#34424f]" />
    </div>
  </div>
);

const Mixer = () => (
  <section className="absolute top-[361px] right-0 left-0 flex flex-col overflow-hidden border-b-2 border-[#7fb6c8] bg-[#243140]">
    <WinTitle title="Mixer" className="h-[13px] border-t border-[#8a949d] bg-linear-to-b from-[#9db9da] to-[#bad0e8] pr-[2px] text-[#1b2a3a]">
      <button aria-label="Minimieren" className="flex h-[9px] w-[15px] items-center justify-center rounded-[1px] border border-[#8ca5c2]"><span className="h-[3px] w-[6px] border border-[#66788d] bg-white" /></button>
      <button aria-label="Maximieren" className="flex h-[9px] w-[15px] items-center justify-center rounded-[1px] border border-[#a5bad2]"><span className="h-[4px] w-[5px] border border-[#7c8da2]" /></button>
      <button aria-label="Schließen" className="flex h-[9px] w-[15px] items-center justify-center rounded-[1px] border border-[#7a2a1c] bg-linear-to-b from-[#dc8a78] to-[#b5301c] text-white"><X className="size-[7px]" strokeWidth={4} /></button>
    </WinTitle>
    <div className="flex">
      <MixerSide />
      <div className="flex w-[44px] shrink-0 flex-col">
        <Channel c={MONO_IN} />
        <div className="flex h-[8px] items-center justify-between bg-[#55697b] px-px"><Arrow /><span className="mx-auto mr-px h-[7px] w-[16px] bg-[#c3ccd4]" /><Arrow right /></div>
      </div>
      <Divider />
      <div className="min-w-0 flex-1">
        <div className="flex overflow-hidden">
          {CHANNELS.map((c) => <Channel key={c.no} c={c} />)}
        </div>
        <div className="flex h-[8px] items-center bg-[#a9b2ba]">
          <Arrow />
          <span className="h-[7px] w-[34px] bg-[#c3ccd4]" />
          <span className="h-full w-[910px] bg-[#52636f]" />
          <span className="ml-auto flex"><Arrow right /></span>
        </div>
      </div>
      <Divider />
      <div className="w-[40px] shrink-0 overflow-hidden">
        <Channel c={STEREO_OUT} />
        <div className="flex h-[8px] items-center justify-between bg-[#55697b] px-px"><Arrow /><span className="ml-auto h-[7px] w-[10px] bg-[#c3ccd4]" /><Arrow right /></div>
      </div>
    </div>
  </section>
);

const TAG = 'bg-[#4a5b6c] px-px text-[5px] leading-[6px] text-[#c8d2db]';

const TransportPanel = () => (
  <section className="absolute top-[601px] left-[207px] flex h-[35px] w-[419px] gap-[3px] border border-[#5c7893] bg-linear-to-b from-[#46617c] to-[#2f4963] px-[2px] py-px text-[6px] leading-none text-[#8fa0b0]">
    <button aria-label="Schließen" className="self-start text-[#9fb4c8]"><X className="size-[5px]" /></button>
    <div className="flex w-[7px] items-end border border-[#1a242e] bg-black px-px pb-px"><span className="h-[7px] w-full bg-[#26c4dd]" /></div>
    <div className="flex w-[41px] flex-col justify-between bg-black text-[5px]">
      <div className="flex h-[10px] items-center gap-px pl-px">
        <svg viewBox="0 0 8 8" className="size-[7px] shrink-0"><circle cx="3" cy="3" r="2" fill="none" stroke="#c03030" /><path d="M2 6h6" stroke="#c03030" /></svg>
        <Drop label="Aufnahmemodus" value="Normal" className="h-[9px] w-[32px]" />
      </div>
      <div className="flex h-[10px] items-center gap-px pl-px"><Repeat className="size-[7px] shrink-0 text-[#c03030]" strokeWidth={3} /><Drop label="Cycle-Modus" value="Mix (MIDI)" className="h-[9px] w-[32px]" /></div>
      <div className="flex h-[7px] gap-[2px] bg-[#0c1219]"><button className={TAG}>AUTO Q</button><span className="leading-[7px]">OFF</span></div>
    </div>
    <div className="grid w-[57px] grid-cols-[9px_1fr] gap-x-px text-right">
      {[['L', '100.  4.  4.  11', 'I/D'], ['R', '100.  4.  3.  42', 'O/I']].map(([k, pos, t]) => (
        <React.Fragment key={k}>
          <span className="bg-[#1c2a38] text-center leading-[8px] text-[#8fa0b0]">{k}</span>
          <div className="border-b border-[#2f4963] bg-black pr-px">
            <div className="leading-[8px] font-bold whitespace-pre text-[#dde4ea]">{pos}</div>
            <div className="flex justify-end gap-[4px] leading-[7px] text-[#5d6c7a]"><span>0.</span><span>0</span><span className={TAG}>{t}</span></div>
          </div>
        </React.Fragment>
      ))}
    </div>
    <div className="flex flex-1 flex-col gap-[2px]">
      <div className="flex flex-1 flex-col bg-black">
        <div className="flex flex-1 items-center px-[2px] text-[#dfe7ec]">
          <span className="text-[#8fa0b0]">±</span>
          <span className="ml-[14px] text-[8px] font-bold whitespace-pre">49.  3.  2.  10</span>
          <span className="ml-[5px] text-[8px] text-[#6e94a8]">♩</span>
          <span className="ml-auto font-bold">0:02:04.045</span>
          <span className="ml-[2px] size-[5px] rounded-full border border-[#5a7f93]" />
        </div>
        <div className="mx-px mb-px h-[2px] bg-[#1f2d39]"><div className="h-full w-[27px] bg-[#20d468]" /></div>
      </div>
      <TransportButtons />
    </div>
    <div className="flex w-[57px] flex-col justify-between bg-black text-[5px]">
      <div className="flex gap-[2px]"><button className={`${TAG} w-[17px]`}>CLICK</button><span className="leading-[7px]">OFF</span><span className={`${TAG} ml-auto`}>I I✱</span></div>
      <div className="flex gap-[2px]"><button className="w-[17px] bg-[#d5dce2] leading-[6px] text-[#1c2733]">TEMPO</button><span className="leading-[7px]">TRACK</span><span className="ml-auto text-[6px] leading-[7px] font-bold text-[#dfe7ec]">4/4</span></div>
      <div className="text-right text-[6px] leading-[7px] font-bold text-[#e57a3c]">93.000</div>
      <div className="flex justify-between border-t border-[#2f4963]"><button className="w-[17px] bg-[#d5dce2] leading-[7px] text-[#1c2733]">SYNC</button><span className="leading-[8px] text-[#c96e3c]">Offline</span></div>
    </div>
    <div className="w-[45px] bg-black text-[5px]">
      <div className="flex justify-between"><button className={`${TAG} w-[17px]`}>SHOW</button><span className="leading-[7px]">MARKER</span></div>
      <div className="grid grid-cols-5 text-center leading-[8px]">
        {Array.from({ length: 15 }, (_, i) => <button key={i}>{i + 1}</button>)}
      </div>
    </div>
    <div className="flex w-[7px] gap-px bg-[#4a5b6c] p-px"><span className="flex-1 bg-black" /><span className="flex-1 bg-black" /></div>
    <div className="flex w-[19px] gap-px border border-black bg-[#1b2937] p-px">
      <span className="w-[8px] bg-[#22303e]" />
      <span className="flex flex-1 items-end gap-px bg-[#22303e]"><span className="h-[7px] w-[3px] bg-[#2fc4a4]" /><span className="h-[6px] w-[3px] bg-[#37c978]" /></span>
    </div>
    <div className="flex w-[5px] items-center justify-center rounded-full border border-[#7b93aa] bg-[#22364a]"><span className="size-[3px] shrink-0 rounded-full bg-white" /></div>
    <button aria-label="Einstellungen" className="self-start text-[#9fb4c8]"><X className="size-[5px]" /></button>
  </section>
);

const Taskbar = () => (
  <footer className="flex h-[20px] shrink-0 items-stretch bg-black text-[7px] text-[#e5e5e5] font-['Open_Sans',sans-serif]">
    <button aria-label="Start" className="flex w-[24px] items-center justify-center">
      <svg viewBox="0 0 16 16" className="size-[8px]"><path d="M0 2l7-1v6H0zM8 1l8-1v7H8zM0 8h7v7l-7-1zM8 8h8v8l-8-1z" fill="#fff" /></svg>
    </button>
    <input aria-label="Suche" placeholder="Web und Windows durchsuchen" className="w-[172px] bg-[#343434] pl-[6px] text-[7px] outline-none placeholder:text-[#8d8d8d]" />
    <div className="flex">
      <button aria-label="Taskansicht" className="flex w-[25px] items-center justify-center">
        <svg viewBox="0 0 20 16" className="h-[8px] w-[10px]"><path d="M5 1h10v14H5zM1 3v10M19 3v10" fill="none" stroke="#c8c8c8" strokeWidth="1.5" /></svg>
      </button>
      <button aria-label="Explorer" className="flex w-[25px] items-center justify-center">
        <svg viewBox="0 0 22 20" className="h-[10px] w-[11px]"><path d="M0 2h8l2 3h12v14H0z" fill="#f7d774" /><path d="M3 19v-8h16v8h-4v-4H7v4z" fill="#3aa6e0" /></svg>
      </button>
      <button aria-label="Media Player" className="flex w-[25px] items-center justify-center">
        <svg viewBox="0 0 20 20" className="size-[10px]"><path d="M1 1h18v18H1z" fill="#6fa9cf" /><circle cx="10" cy="10" r="7" fill="#f07a1c" /><path d="M7 5l7 5-7 5z" fill="#fff" /></svg>
      </button>
      <button aria-label="Remote" className="flex w-[25px] items-center justify-center">
        <svg viewBox="0 0 22 22" className="size-[11px]"><path d="M2 2l13-1 2 10-12 3z" fill="#2c57d8" stroke="#dde6f4" strokeWidth="1.5" /><path d="M9 14l9-3 3 8-9 3z" fill="#b9c8dd" /></svg>
      </button>
      <button aria-label="Firefox" className="flex w-[25px] items-center justify-center">
        <span className="flex h-full w-[21px] items-center justify-center border-b border-[#dff0b4]">
          <svg viewBox="0 0 22 22" className="size-[11px]"><circle cx="11" cy="11" r="10" fill="#e8701a" /><circle cx="12" cy="9" r="6.5" fill="#2d74c9" /><path d="M3 5q2 9 10 8-3 5-9 2z" fill="#f6a623" /></svg>
        </span>
      </button>
      <button aria-label="Nvidia" className="flex w-[25px] items-center justify-center border-b border-[#e07020] bg-[#5b3a22]">
        <svg viewBox="0 0 22 22" className="size-[12px]"><path d="M0 0h22v22H0z" fill="#1c2417" /><path d="M2 12Q8 5 19 6M5 13q5-6 14-3M8 14q4-4 10 0M4 15q6 6 15-4v9" fill="none" stroke="#74b71b" strokeWidth="2" /></svg>
      </button>
      <button aria-label="Cubase" className="flex w-[24px] items-center justify-center border-b border-[#dff0b4] bg-[#353535]"><Logo className="size-[11px]" /></button>
    </div>
    <div className="ml-auto flex items-center gap-[5px] pr-[8px]">
      <ChevronUp className="size-[7px]" />
      <span className="flex size-[8px] items-center justify-center bg-[#dd1a22]"><svg viewBox="0 0 10 10" className="size-[6px]"><path d="M1 5q4-6 8 0zM5 5v4" fill="#fff" stroke="#fff" /></svg></span>
      <Wifi className="size-[7px] -rotate-45 text-[#aaa]" />
      <Volume2 className="size-[7px] text-[#aaa]" />
      <MessageSquare className="size-[8px] fill-white" />
      <span className="mr-[6px] text-[6px]">DEU</span>
      <div className="w-[29px] text-center text-[6px] leading-[8px]"><div>14:07</div><div>01.09.2015</div></div>
    </div>
  </footer>
);

const MENU = ['Datei', 'Bearbeiten', 'Projekt', 'Audio', 'MIDI', 'Notation', 'Medien', 'Transport', 'Geräte', 'Fenster (1)', 'Hilfe'];

const App = () => (
  <div className="flex h-screen flex-col overflow-hidden bg-[#c9cbc0] font-['Liberation_Sans',Arial,sans-serif]">
    <div className="flex min-h-0 flex-1 flex-col border-t border-[#e4ecc8] border-r-[3px] border-r-[#eceedd] pl-[4px]">
      <header className="shrink-0 bg-white font-['Open_Sans',sans-serif] text-[6px] text-[#1a1a1a]">
        <div className="flex h-[12px] items-center gap-px pl-px leading-none">
          <Logo className="size-[7px]" />
          <h1>Cubase 5</h1>
          <div className="ml-auto flex items-center gap-[16px] pr-[4px]">
            <button aria-label="Minimieren"><Minus className="size-[7px]" /></button>
            <button aria-label="Maximieren"><Square className="size-[6px]" /></button>
            <button aria-label="Schließen"><X className="size-[8px]" /></button>
          </div>
        </div>
        <nav className="flex h-[11px] items-center gap-[6px] pb-[2px] pl-[2px] leading-none">
          {MENU.map((m) => <button key={m}>{m}</button>)}
        </nav>
      </header>
      <div className="flex min-h-0 flex-1">
        <div className="relative flex min-w-0 flex-1 flex-col overflow-hidden border-t border-[#9a9fa3] bg-[#253746] pt-[3px]">
          <ProjectWindow />
          <Mixer />
          <TransportPanel />
        </div>
        <div className="flex w-[9px] shrink-0 flex-col items-center justify-between bg-[#f0f0f0] text-[#555]">
          <ChevronUp className="size-[8px] shrink-0" strokeWidth={3} />
          <span className="min-h-0 w-full flex-1 bg-[#cdcdcd]" />
          <ChevronDown className="mt-[10px] size-[8px] shrink-0" strokeWidth={3} />
        </div>
      </div>
      <div className="mb-[3px] flex h-[9px] shrink-0 items-center bg-[#f0f0f0] text-[#555]">
        <ChevronLeft className="size-[8px]" strokeWidth={3} />
        <span className="h-[8px] flex-1 bg-[#cdcdcd]" />
        <ChevronRight className="mr-[8px] ml-[23px] size-[8px]" strokeWidth={3} />
      </div>
    </div>
    <Taskbar />
  </div>
);

export default App;
